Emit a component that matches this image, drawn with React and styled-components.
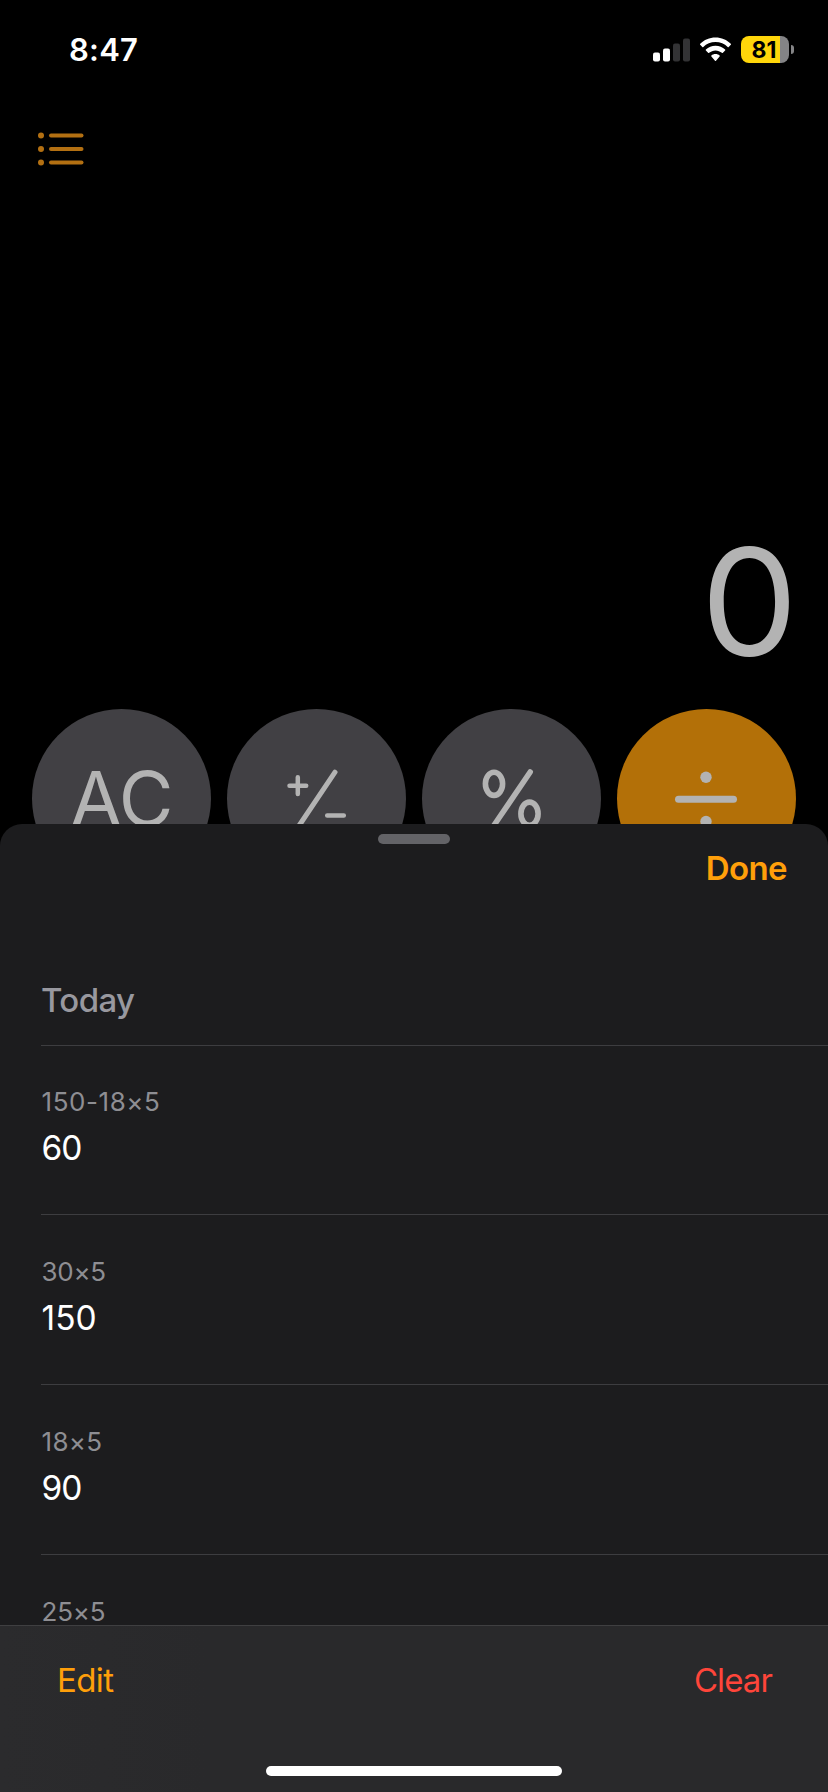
import React from 'react';
import styled, { createGlobalStyle } from 'styled-components';

const GlobalStyle = createGlobalStyle`
  *, *::before, *::after { box-sizing: border-box; }
  body {
    margin: 0;
    background: #000;
    font-family: Inter, "Liberation Sans", sans-serif;
  }
`;

const Screen = styled.main`
  position: relative;
  display: flex;
  flex-direction: column;
  width: 828px;
  height: 1792px;
  overflow: hidden;
  background: #000;
`;

const StatusBar = styled.header`
  display: flex;
  align-items: center;
  justify-content: space-between;
  height: 99px;
  padding: 0 34px 0 69px;
`;

const Clock = styled.time`
  color: #fff;
  font-size: 31px;
  font-weight: 600;
  letter-spacing: 0.2px;
  line-height: 40px;
`;

const StatusIcons = styled.div`
  display: flex;
  align-items: center;
`;

const SignalIcon = styled.svg`
  width: 37px;
  height: 24px;
  margin-right: 10px;
`;

const WifiIcon = styled.svg`
  width: 31px;
  height: 25px;
  margin-right: 10px;
`;

const Battery = styled.div`
  display: flex;
  align-items: center;
  justify-content: center;
  width: 48px;
  height: 27px;
  padding: 1px 3px 0 1px;
  border-radius: 8px;
  background: linear-gradient(to right, #ffd60a 39px, #848486 39px);
  color: #000;
  font-size: 23px;
  font-weight: 700;
  line-height: 26px;
`;

const BatteryCap = styled.div`
  width: 3px;
  height: 9px;
  margin-left: 2px;
  border-radius: 0 4px 4px 0;
  background: #848486;
`;

const TopBar = styled.nav`
  display: flex;
  align-items: center;
  height: 99px;
  padding: 0 38px;
`;

const ListIcon = styled.svg`
  width: 46px;
  height: 34px;
  color: #b37012;
`;

const Display = styled.output`
  display: flex;
  align-items: flex-end;
  justify-content: flex-end;
  height: 511px;
  padding: 0 30px 17px 0;
  color: #b3b3b3;
  font-size: 149px;
  font-weight: 400;
  line-height: 180px;
`;

const Digits = styled.span`
  transform: scaleX(1.035);
  transform-origin: right center;
`;

const KeyRow = styled.div`
  display: flex;
  gap: 16px;
  padding: 0 32px;
`;

const Key = styled.button`
  display: flex;
  align-items: center;
  justify-content: center;
  width: 179px;
  height: 179px;
  padding: 0;
  border: 0;
  border-radius: 50%;
  background: ${({ $operator }) => ($operator ? '#b37008' : '#414044')};
  color: #b3b3b3;
  font-family: inherit;
  font-size: 75px;
  font-weight: 400;
  letter-spacing: -0.8px;
  line-height: 90px;
`;

const KeySymbol = styled.svg`
  width: 179px;
  height: 179px;
  fill: none;
  stroke: currentColor;
  stroke-linecap: round;
`;

const Sheet = styled.section`
  position: absolute;
  inset: 824px 0 0;
  display: flex;
  flex-direction: column;
  border-radius: 22px 22px 0 0;
  background: #1c1c1e;
  overflow: hidden;
`;

const Grabber = styled.div`
  align-self: center;
  flex: none;
  width: 72px;
  height: 10px;
  margin-top: 10px;
  border-radius: 5px;
  background: #636367;
`;

const SheetHeader = styled.div`
  display: flex;
  justify-content: flex-end;
  flex: none;
  height: 126px;
  padding: 4px 41px 0;
`;

const TextButton = styled.button`
  height: 40px;
  padding: 0;
  border: 0;
  background: none;
  color: ${({ $danger }) => ($danger ? '#ff453a' : '#ff9f0a')};
  font-family: inherit;
  font-size: 33px;
  font-weight: ${({ $strong }) => ($strong ? 600 : 400)};
  letter-spacing: ${({ $danger }) => ($danger ? '-0.9px' : '-0.6px')};
  line-height: 40px;
`;

const History = styled.div`
  flex: 1;
  min-height: 0;
  margin-left: 41px;
  overflow: hidden;
`;

const DayTitle = styled.h2`
  height: 76px;
  margin: 0;
  padding: 10px 0 0;
  border-bottom: 1px solid #3d3d40;
  color: #98989f;
  font-size: 33px;
  font-weight: 500;
  letter-spacing: -0.6px;
  line-height: 40px;
`;

const Entry = styled.div`
  height: 170px;
  padding: 45px 0 0 0.6px;
  border-bottom: 1px solid #3d3d40;

  &:first-of-type {
    height: 169px;
    padding-top: 44px;
  }
`;

const Expression = styled.div`
  color: #8e8e93;
  font-size: 26px;
  letter-spacing: ${({ $spacing }) => $spacing}px;
  line-height: 24px;
`;

const Result = styled.div`
  margin-top: 14px;
  color: #fff;
  font-size: 33.5px;
  letter-spacing: ${({ $spacing }) => $spacing}px;
  line-height: 40px;
`;

const Toolbar = styled.footer`
  display: flex;
  flex-direction: column;
  align-items: center;
  justify-content: space-between;
  flex: none;
  height: 167px;
  padding: 34px 0 16px;
  border-top: 1px solid #3f3f41;
  background: linear-gradient(to right, #2b2b2d, #29292b 25%);
`;

const Actions = styled.div`
  display: flex;
  justify-content: space-between;
  width: 100%;
  padding: 0 56px 0 57px;
`;

const HomeIndicator = styled.div`
  width: 296px;
  height: 10px;
  border-radius: 5px;
  background: #fff;
`;

const entries = [
  { expression: '150-18×5', result: '60', tracking: 0.55, resultTracking: -1.2 },
  { expression: '30×5', result: '150', tracking: -0.3, resultTracking: 0 },
  { expression: '18×5', result: '90', tracking: 0.25, resultTracking: -1.2 },
  { expression: '25×5', tracking: -0.2 },
];

export default function App() {
  return (
    <>
      <GlobalStyle />
      <Screen>
        <StatusBar>
          <Clock>8:47</Clock>
          <StatusIcons>
            <SignalIcon viewBox="0 0 37 24" fill="#333335">
              <rect x="0" y="14.5" width="7" height="9" rx="2" fill="#fff" />
              <rect x="10" y="10.5" width="7" height="13" rx="2" fill="#fff" />
              <rect x="20" y="5.5" width="7" height="18" rx="2" />
              <rect x="30" y="0.5" width="7" height="23" rx="2" />
            </SignalIcon>
            <WifiIcon viewBox="0 0 31 25" fill="#fff">
              <path d="M15.5 0.5C21.5 0.5 27 2.9 30.8 6.8Q31.3 7.3 30.8 7.8L28.7 9.9Q28.2 10.4 27.7 9.9C24.5 6.9 20.3 5.1 15.5 5.1S6.5 6.9 3.3 9.9Q2.8 10.4 2.3 9.9L.2 7.8Q-.3 7.3 .2 6.8C4 2.9 9.5.5 15.5.5Z" />
              <path d="M15.5 8.8C19.2 8.8 22.6 10.3 25.1 12.6Q25.6 13.1 25.1 13.6L22.9 15.8Q22.4 16.3 21.9 15.8C20.1 14.3 17.9 13.4 15.5 13.4S10.9 14.3 9.1 15.8Q8.6 16.3 8.1 15.8L5.9 13.6Q5.4 13.1 5.9 12.6C8.4 10.3 11.8 8.8 15.5 8.8Z" />
              <path d="M15.5 17C17.2 17 18.5 17.5 19.6 18.5Q20.1 19 19.6 19.5L16 23.7Q15.5 24.2 15 23.7L11.4 19.5Q10.9 19 11.4 18.5C12.5 17.5 13.8 17 15.5 17Z" />
            </WifiIcon>
            <Battery>81</Battery>
            <BatteryCap />
          </StatusIcons>
        </StatusBar>

        <TopBar>
          <ListIcon viewBox="0 0 46 34" fill="currentColor">
            {[3.5, 17, 30.5].map((y) => (
              <g key={y}>
                <circle cx="3" cy={y} r="3" />
                <rect x="11" y={y - 2} width="34.5" height="4" rx="2" />
              </g>
            ))}
          </ListIcon>
        </TopBar>

        <Display>
          <Digits>0</Digits>
        </Display>

        <KeyRow>
          <Key>AC</Key>
          <Key aria-label="Plus minus">
            <KeySymbol viewBox="0 0 179 179" strokeWidth="4.5">
              <path d="M62.5 76.7H79.2M70.8 68.3V85M100.2 106.6H116.8" />
              <path d="M108 63.2L71.5 117.5" strokeWidth="5" />
            </KeySymbol>
          </Key>
          <Key aria-label="Percent">
            <KeySymbol viewBox="0 0 179 179" strokeWidth="5.6">
              <ellipse cx="72" cy="74.8" rx="8.6" ry="11.6" />
              <ellipse cx="107.5" cy="104.7" rx="8.6" ry="11.6" />
              <path d="M108.2 63L71.5 117" />
            </KeySymbol>
          </Key>
          <Key $operator aria-label="Divide">
            <KeySymbol viewBox="0 0 179 179" strokeWidth="7">
              <path d="M61.5 90.3H116.5" />
              <circle cx="89" cy="68.3" r="5.7" fill="currentColor" stroke="none" />
              <circle cx="89" cy="112.5" r="5.7" fill="currentColor" stroke="none" />
            </KeySymbol>
          </Key>
        </KeyRow>

        <Sheet>
          <Grabber />
          <SheetHeader>
            <TextButton $strong>Done</TextButton>
          </SheetHeader>
          <History>
            <DayTitle>Today</DayTitle>
            {entries.map(({ expression, result, tracking, resultTracking }) => (
              <Entry key={expression}>
                <Expression $spacing={tracking}>{expression}</Expression>
                {result && <Result $spacing={resultTracking}>{result}</Result>}
              </Entry>
            ))}
          </History>
          <Toolbar>
            <Actions>
              <TextButton>Edit</TextButton>
              <TextButton $danger>Clear</TextButton>
            </Actions>
            <HomeIndicator />
          </Toolbar>
        </Sheet>
      </Screen>
    </>
  );
}
